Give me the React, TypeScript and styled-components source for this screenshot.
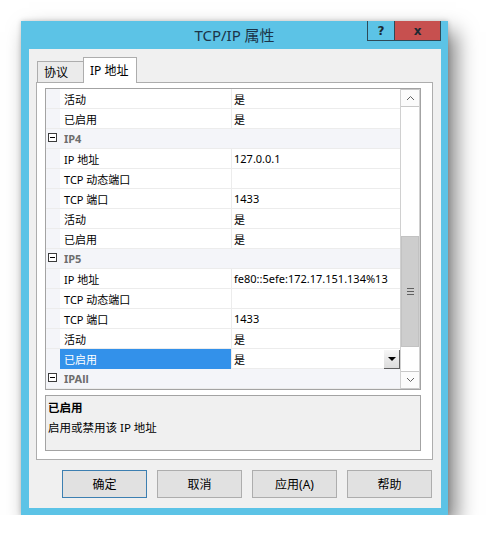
import { FC } from 'react';
import styled, { createGlobalStyle } from 'styled-components';

type GridItem =
  | { kind: 'group'; label: string }
  | { kind: 'prop'; name: string; value: string; selected?: boolean };

const items: GridItem[] = [
  { kind: 'prop', name: '活动', value: '是' },
  { kind: 'prop', name: '已启用', value: '是' },
  { kind: 'group', label: 'IP4' },
  { kind: 'prop', name: 'IP 地址', value: '127.0.0.1' },
  { kind: 'prop', name: 'TCP 动态端口', value: '' },
  { kind: 'prop', name: 'TCP 端口', value: '1433' },
  { kind: 'prop', name: '活动', value: '是' },
  { kind: 'prop', name: '已启用', value: '是' },
  { kind: 'group', label: 'IP5' },
  { kind: 'prop', name: 'IP 地址', value: 'fe80::5efe:172.17.151.134%13' },
  { kind: 'prop', name: 'TCP 动态端口', value: '' },
  { kind: 'prop', name: 'TCP 端口', value: '1433' },
  { kind: 'prop', name: '活动', value: '是' },
  { kind: 'prop', name: '已启用', value: '是', selected: true },
  { kind: 'group', label: 'IPAll' },
];

const buttons = ['确定', '取消', '应用(A)', '帮助'];

const GlobalStyle = createGlobalStyle`
  body {
    margin: 0;
    background: #ffffff;
    font-family: 'Noto Sans', 'Noto Sans CJK SC', sans-serif;
  }
`;

const Page = styled.div`
  padding: 21px 0 0 21px;
`;

const Window = styled.div`
  width: 427px;
  height: 494px;
  box-sizing: border-box;
  background: #5cc3e6;
  display: flex;
  flex-direction: column;
  box-shadow: 8px 11px 20px rgba(0, 0, 0, 0.5), 0 0 5px rgba(0, 0, 0, 0.2);
`;

const TitleBar = styled.div`
  height: 28px;
  flex: none;
  display: grid;
  grid-template-columns: 1fr auto 1fr;
  align-items: start;
`;

const Title = styled.div`
  grid-column: 2;
  line-height: 28px;
  font-size: 15px;
  color: #1b3448;
`;

const Caption = styled.div`
  grid-column: 3;
  justify-self: end;
  display: flex;
  margin-right: 7px;
`;

const CaptionButton = styled.div<{ $close?: boolean }>`
  width: ${(p) => (p.$close ? 46 : 28)}px;
  height: 20px;
  box-sizing: border-box;
  border: 1px solid #2d4a58;
  border-top: none;
  ${(p) => (p.$close ? 'border-left: none;' : '')}
  background: ${(p) => (p.$close ? '#c7504f' : 'transparent')};
  display: flex;
  align-items: center;
  justify-content: center;
  font-family: 'DejaVu Sans', sans-serif;
  font-weight: bold;
  font-size: 12px;
  color: #1b2a33;
`;

const Client = styled.div`
  flex: 1;
  margin: 0 7px 7px 8px;
  background: #f0f0f0;
  padding: 9px 8px 10px 7px;
  display: flex;
  flex-direction: column;
  font-size: 12px;
  color: #000;
`;

const TabStrip = styled.div`
  height: 25px;
  display: flex;
  align-items: flex-end;
  padding-left: 1px;
  margin-bottom: -1px;
  position: relative;
  z-index: 1;
`;

const Tab = styled.div<{ $active?: boolean }>`
  box-sizing: border-box;
  height: ${(p) => (p.$active ? 26 : 22)}px;
  width: ${(p) => (p.$active ? 54 : 46)}px;
  border: 1px solid #adadad;
  border-bottom: ${(p) => (p.$active ? 'none' : '1px solid #adadad')};
  ${(p) => (p.$active ? '' : 'border-right: none;')}
  background: ${(p) => (p.$active ? '#ffffff' : '#ebebeb')};
  padding-left: 6px;
  display: flex;
  align-items: center;
  padding-bottom: ${(p) => (p.$active ? 2 : 0)}px;
`;

const TabPanel = styled.div`
  border: 1px solid #adadad;
  background: #ffffff;
  padding: 5px 11px 8px 8px;
  display: flex;
  flex-direction: column;
  gap: 5px;
`;

const Grid = styled.div`
  border: 1px solid #a3a3a3;
  display: flex;
  height: 300px;
  font-size: 11px;
`;

const Rows = styled.div`
  flex: 1;
  display: flex;
  flex-direction: column;
  overflow: hidden;
`;

const Row = styled.div`
  height: 20px;
  flex: none;
  box-sizing: border-box;
  display: grid;
  grid-template-columns: 14px 171px 1fr;
  border-bottom: 1px solid #ececec;
`;

const Gutter = styled.div`
  background: #f4f5f9;
`;

const NameCell = styled.div<{ $selected?: boolean }>`
  padding-left: 4px;
  display: flex;
  align-items: center;
  white-space: nowrap;
  background: ${(p) => (p.$selected ? '#3391ea' : 'transparent')};
  color: ${(p) => (p.$selected ? '#ffffff' : '#000000')};
`;

const ValueCell = styled.div`
  border-left: 1px solid #ececec;
  padding-left: 2px;
  display: flex;
  align-items: center;
  justify-content: space-between;
  white-space: nowrap;
`;

const GroupRow = styled(Row)`
  background: #f4f5f9;
  grid-template-columns: 14px 1fr;
`;

const Toggle = styled.div`
  width: 9px;
  height: 9px;
  box-sizing: border-box;
  margin: 4px 0 0 2px;
  border: 1px solid #3c3c3c;
  background: #ffffff;
  display: flex;
  align-items: center;
  justify-content: center;
  &::after {
    content: '';
    width: 5px;
    height: 1px;
    background: #000;
  }
`;

const GroupLabel = styled.div`
  padding-left: 4px;
  display: flex;
  align-items: center;
  font-weight: bold;
  color: #6d6d6d;
`;

const DropButton = styled.div`
  width: 16px;
  height: 19px;
  box-sizing: border-box;
  align-self: flex-start;
  margin-top: 1px;
  background: linear-gradient(#f6f6f6, #dcdcdc);
  border-right: 1px solid #5f5f5f;
  border-bottom: 1px solid #5f5f5f;
  display: flex;
  align-items: center;
  justify-content: center;
  &::after {
    content: '';
    border-left: 4px solid transparent;
    border-right: 4px solid transparent;
    border-top: 4px solid #000;
  }
`;

const ScrollBar = styled.div`
  width: 18px;
  flex: none;
  display: flex;
  flex-direction: column;
  background: #ffffff;
  border-left: 1px solid #d0d0d0;
  border-right: 1px solid #d0d0d0;
`;

const ScrollArrow = styled.div`
  height: 18px;
  flex: none;
  box-sizing: border-box;
  border: 1px solid #c8c8c8;
  border-left: none;
  border-right: none;
  background: #fbfbfb;
  display: flex;
  align-items: center;
  justify-content: center;
`;

const Track = styled.div`
  flex: 1;
`;

const Thumb = styled.div`
  box-sizing: border-box;
  background: #cdcdcd;
  border: 1px solid #c2c2c2;
  display: flex;
  flex-direction: column;
  align-items: center;
  justify-content: center;
  gap: 2px;
  & span {
    width: 7px;
    height: 1px;
    background: #606060;
  }
`;

const Description = styled.div`
  height: 56px;
  box-sizing: border-box;
  border: 1px solid #a3a3a3;
  background: #f0f0f0;
  padding: 2px 2px;
  display: flex;
  flex-direction: column;
  line-height: 20px;
  font-size: 11.5px;
`;

const DescTitle = styled.div`
  font-weight: bold;
`;

const ButtonRow = styled.div`
  margin-top: 10px;
  margin-right: 1px;
  display: flex;
  justify-content: flex-end;
  gap: 10px;
`;

const Button = styled.div<{ $default?: boolean }>`
  width: 85px;
  height: 28px;
  box-sizing: border-box;
  border: 1px solid ${(p) => (p.$default ? '#3c7fb1' : '#adadad')};
  background: #e1e1e1;
  display: flex;
  align-items: center;
  justify-content: center;
  font-size: 12px;
`;

const Chevron: FC<{ up?: boolean }> = ({ up }) => (
  <svg width='9' height='6' viewBox='0 0 9 6'>
    <path
      d={up ? 'M1 5 L4.5 1.5 L8 5' : 'M1 1 L4.5 4.5 L8 1'}
      fill='none'
      stroke='#606060'
      strokeWidth='1'
    />
  </svg>
);

// visible rows vs. the whole list behind the scroll view
const TRACK = 264;
const thumbTop = Math.round(TRACK * 0.49);
const thumbHeight = Math.round(TRACK * 0.42);

const PropertyGrid: FC = () => (
  <Grid>
    <Rows>
      {items.map((it, i) =>
        it.kind === 'group' ? (
          <GroupRow key={i}>
            <Toggle />
            <GroupLabel>{it.label}</GroupLabel>
          </GroupRow>
        ) : (
          <Row key={i}>
            <Gutter />
            <NameCell $selected={it.selected}>{it.name}</NameCell>
            <ValueCell>
              {it.value}
              {it.selected && <DropButton />}
            </ValueCell>
          </Row>
        )
      )}
    </Rows>
    <ScrollBar>
      <ScrollArrow>
        <Chevron up />
      </ScrollArrow>
      <Track>
        <Thumb style={{ marginTop: thumbTop, height: thumbHeight }}>
          <span />
          <span />
          <span />
        </Thumb>
      </Track>
      <ScrollArrow>
        <Chevron />
      </ScrollArrow>
    </ScrollBar>
  </Grid>
);

const App: FC = () => (
  <Page>
    <GlobalStyle />
    <Window>
      <TitleBar>
        <Title>TCP/IP 属性</Title>
        <Caption>
          <CaptionButton>?</CaptionButton>
          <CaptionButton $close>x</CaptionButton>
        </Caption>
      </TitleBar>
      <Client>
        <TabStrip>
          <Tab>协议</Tab>
          <Tab $active>IP 地址</Tab>
        </TabStrip>
        <TabPanel>
          <PropertyGrid />
          <Description>
            <DescTitle>已启用</DescTitle>
            <div>启用或禁用该 IP 地址</div>
          </Description>
        </TabPanel>
        <ButtonRow>
          {buttons.map((b, i) => (
            <Button key={b} $default={i === 0}>
              {b}
            </Button>
          ))}
        </ButtonRow>
      </Client>
    </Window>
  </Page>
);

export default App;
